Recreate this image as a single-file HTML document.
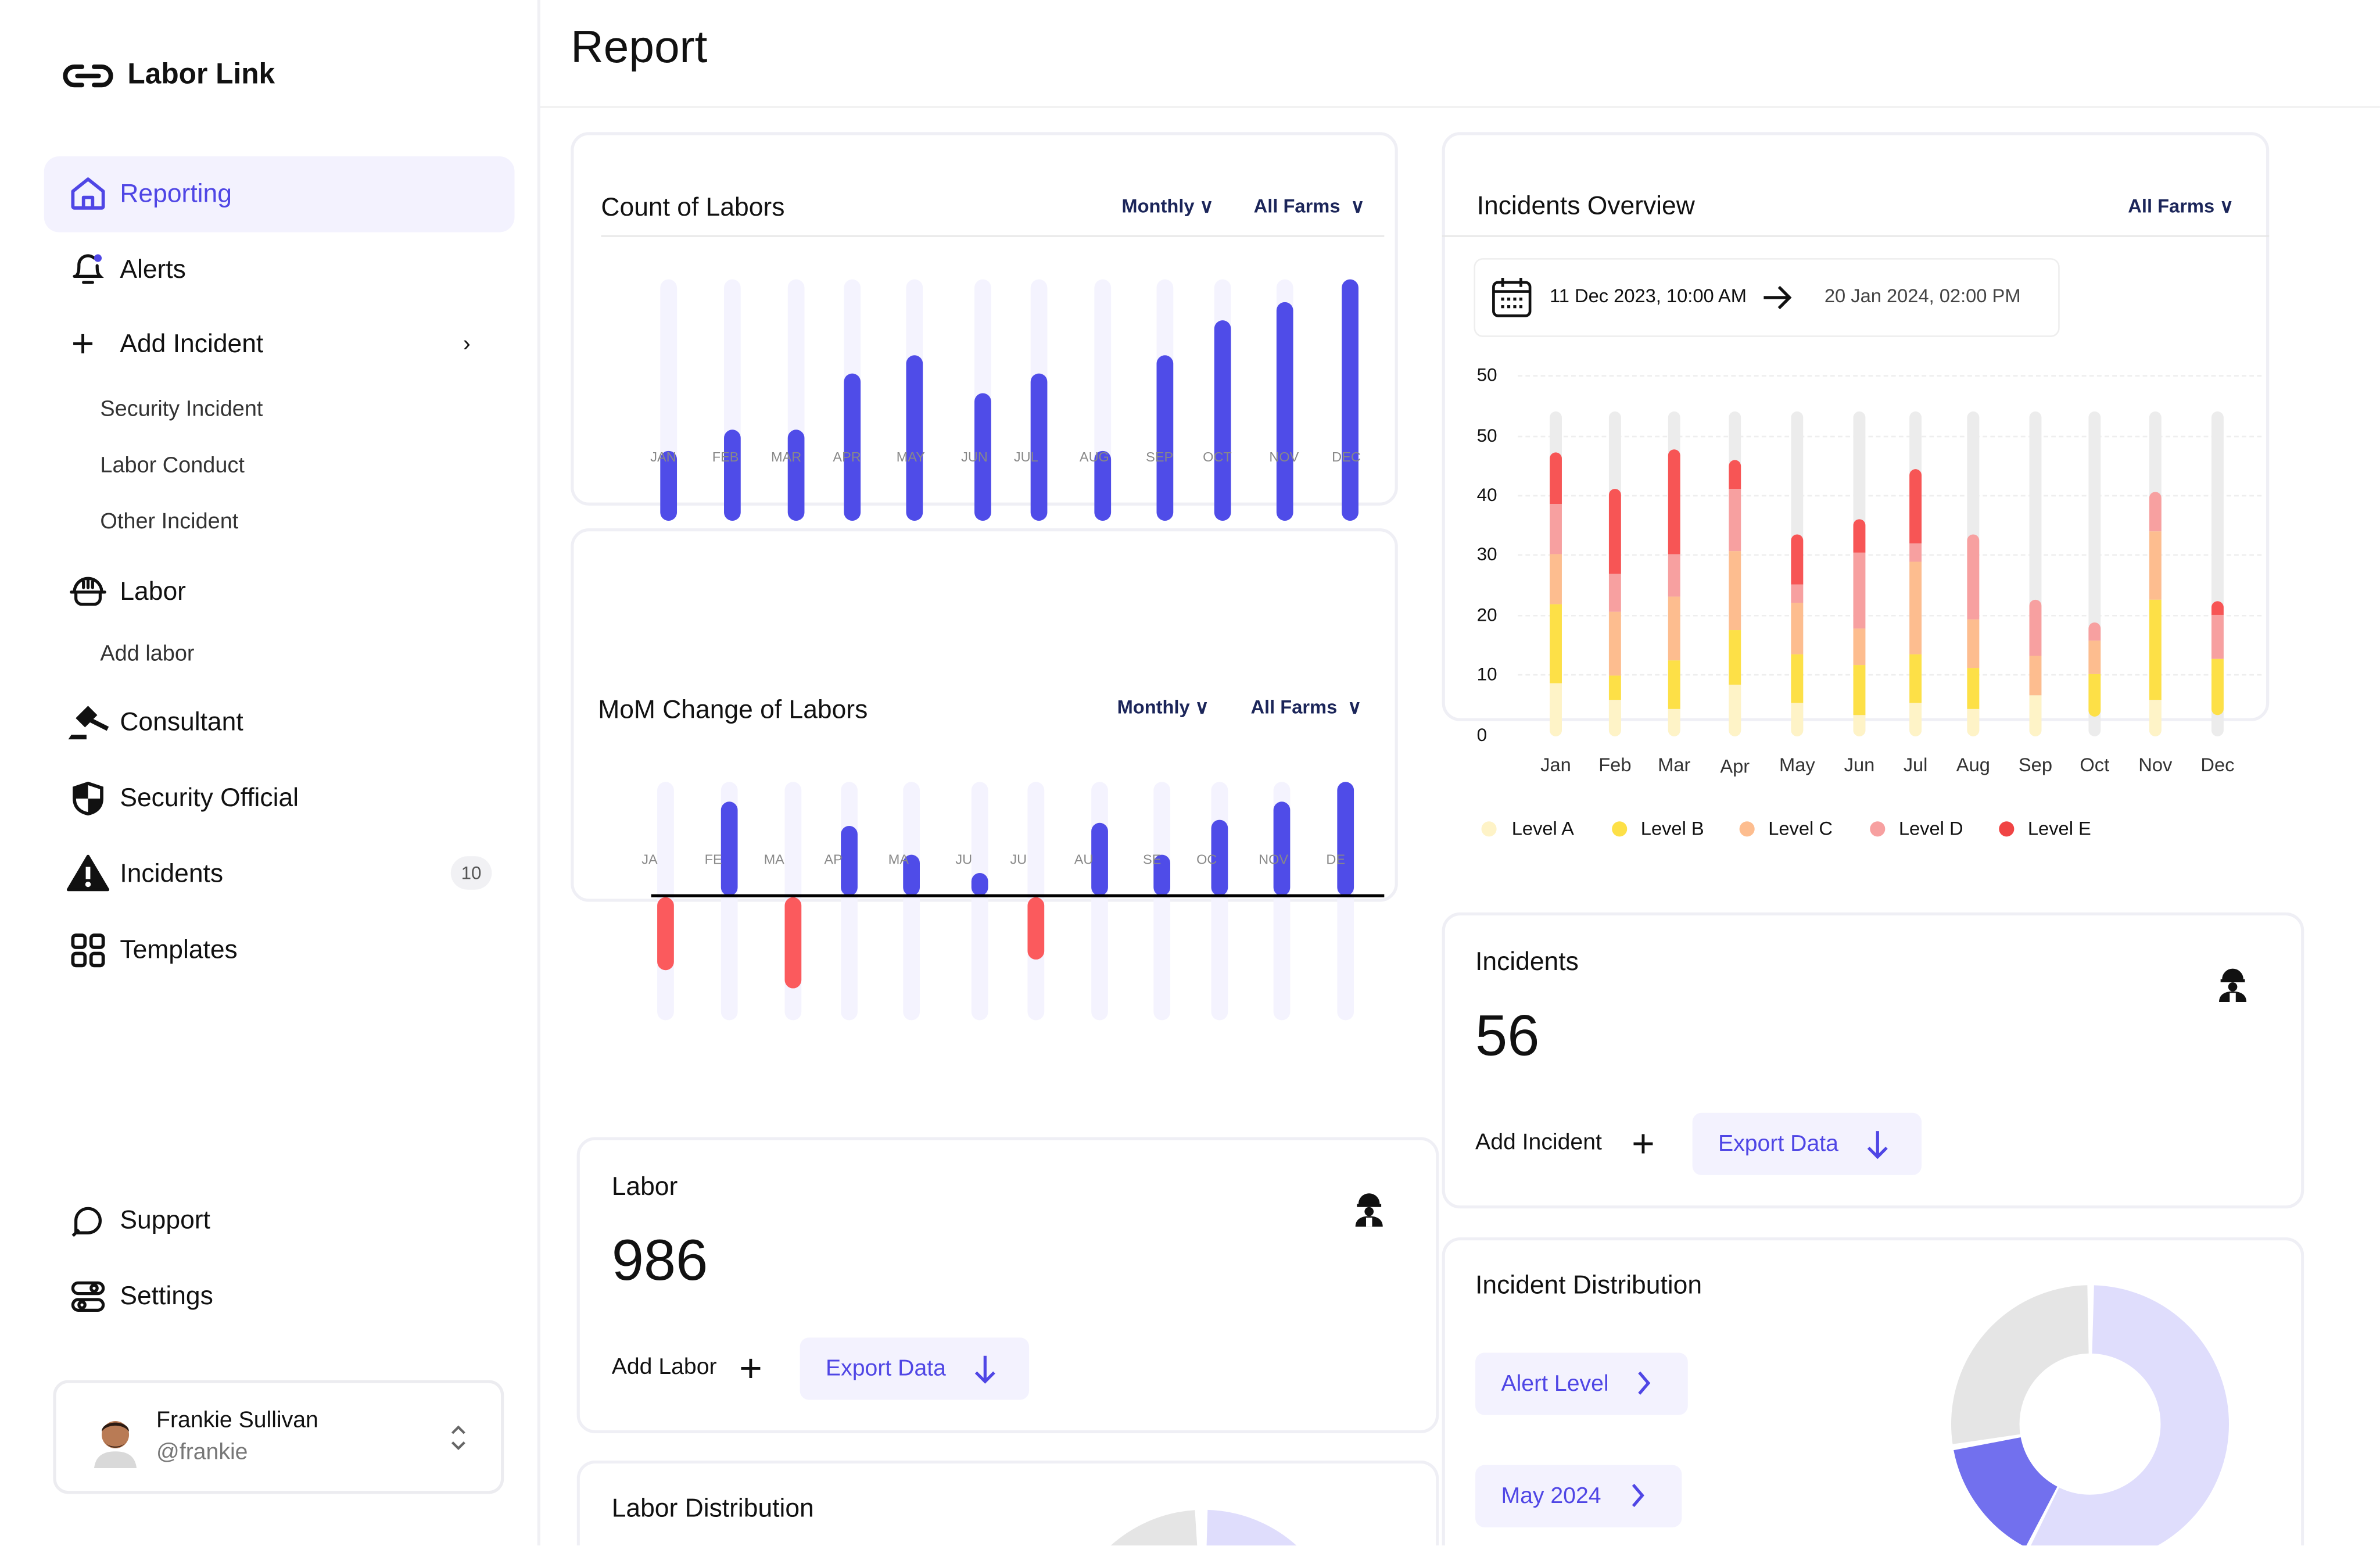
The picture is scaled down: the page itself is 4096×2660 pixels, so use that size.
<!DOCTYPE html>
<html><head><meta charset="utf-8"><style>
html,body{margin:0;padding:0;background:#fff;width:4096px;height:2660px;overflow:hidden}
#w{position:absolute;left:0;top:0;width:1568px;height:1018px;transform:scale(2.6122);transform-origin:0 0;font-family:"Liberation Sans",sans-serif;color:#111;overflow:hidden}
.a{position:absolute}
.card{position:absolute;border:2px solid #efeff5;border-radius:12px;background:#fff;box-sizing:border-box}
.t{position:absolute;width:11px;background:#f4f3fe;border-radius:6px}
.b{position:absolute;width:11px;background:#4f4ce8;border-radius:6px}
.r{position:absolute;width:11px;background:#fb5a5d;border-radius:6px}
.ml{position:absolute;font-size:9px;color:#888;width:40px;text-align:center}
.nav{position:absolute;left:79px;font-size:17px;color:#111}
.sub{position:absolute;left:66px;font-size:14.5px;color:#333}
.dd{position:absolute;font-size:12.5px;color:#1b2559;font-weight:bold}
.st{position:absolute;width:8px;border-radius:4px;background:#ececec}
.s{position:absolute;width:8px;left:0}
.yl{position:absolute;left:973px;font-size:12px;color:#111}
.grid{position:absolute;left:1000px;width:490px;border-top:1px dashed #eee}
.xl{position:absolute;font-size:12.5px;color:#333;width:40px;text-align:center}
.btn{position:absolute;background:#f3f2fe;border-radius:6px;color:#4f46e5;font-size:15px;box-sizing:border-box}
</style></head><body><div id="w">

<!-- sidebar -->
<div class="a" style="left:354px;top:0;width:2px;height:1018px;background:#f0f0f4"></div>
<svg class="a" style="left:41px;top:41px" width="34" height="18" viewBox="0 0 34 18"><path d="M13 3H8a6 6 0 0 0 0 12h5M21 3h5a6 6 0 0 1 0 12h-5M10 9h14" fill="none" stroke="#111" stroke-width="3" stroke-linecap="round"/></svg>
<div class="a" style="left:84px;top:39px;font-size:19px;font-weight:bold">Labor Link</div>

<div class="a" style="left:29px;top:103px;width:310px;height:50px;background:#f3f2fe;border-radius:10px"></div>
<svg class="a" style="left:46px;top:116px" width="24" height="23" viewBox="0 0 24 23"><path d="M2 10L12 2l10 8v10a1 1 0 0 1-1 1H3a1 1 0 0 1-1-1z M9 21v-7h6v7" fill="none" stroke="#4f46e5" stroke-width="2.2" stroke-linejoin="round"/></svg>
<div class="nav" style="top:118px;color:#4f46e5">Reporting</div>

<svg class="a" style="left:46px;top:166px" width="24" height="22" viewBox="0 0 24 22"><path d="M4 16c2-2 2-4 2-8a6 6 0 0 1 10-4M18 9c0 3 0 5 2 7H3M9 20h6" fill="none" stroke="#111" stroke-width="2" stroke-linecap="round"/><circle cx="18.5" cy="4" r="2.5" fill="#4f46e5"/></svg>
<div class="nav" style="top:168px">Alerts</div>
<div class="a" style="left:47px;top:213px;font-size:26px;line-height:26px">+</div>
<div class="nav" style="top:217px">Add Incident</div>
<div class="a" style="left:305px;top:218px;font-size:15px">&#x203A;</div>
<div class="sub" style="top:262px">Security Incident</div>
<div class="sub" style="top:299px">Labor Conduct</div>
<div class="sub" style="top:336px">Other Incident</div>
<svg class="a" style="left:45px;top:378px" width="26" height="24" viewBox="0 0 26 24"><path d="M4 12a9 9 0 0 1 18 0M2 12h22M5 12v4a4 4 0 0 0 4 4h8a4 4 0 0 0 4-4v-4M10 5v4M13 4v5M16 5v4" fill="none" stroke="#111" stroke-width="2" stroke-linecap="round"/></svg>
<div class="nav" style="top:380px">Labor</div>
<div class="sub" style="top:423px">Add labor</div>
<svg class="a" style="left:44px;top:464px" width="28" height="24" viewBox="0 0 28 24"><path d="M1 23h12v-3H3z" fill="#111"/><path d="M8 9l6-6 4 4-6 6zM15 10l12 6" stroke="#111" stroke-width="3" fill="#111"/></svg>
<div class="nav" style="top:466px">Consultant</div>
<svg class="a" style="left:47px;top:514px" width="22" height="24" viewBox="0 0 22 24"><path d="M11 2l9 3v7c0 6-4 9-9 10-5-1-9-4-9-10V5z" fill="none" stroke="#111" stroke-width="2.2"/><path d="M11 2v10H2v-7zM11 12h9c0 6-4 9-9 10z" fill="#111"/></svg>
<div class="nav" style="top:516px">Security Official</div>
<svg class="a" style="left:44px;top:563px" width="28" height="24" viewBox="0 0 28 24"><path d="M14 1L27 23H1z" fill="#111" stroke="#111" stroke-linejoin="round" stroke-width="2"/><rect x="12.5" y="8" width="3" height="8" fill="#fff"/><circle cx="14" cy="19.5" r="1.8" fill="#fff"/></svg>
<div class="nav" style="top:566px">Incidents</div>
<div class="a" style="left:297px;top:564px;width:27px;height:22px;border-radius:11px;background:#f1f1f4;font-size:12px;color:#555;text-align:center;line-height:22px">10</div>
<svg class="a" style="left:46px;top:614px" width="24" height="24" viewBox="0 0 24 24"><g fill="none" stroke="#111" stroke-width="2.2"><rect x="2" y="2" width="8" height="8" rx="2"/><rect x="14" y="2" width="8" height="8" rx="2"/><rect x="2" y="14" width="8" height="8" rx="2"/><rect x="14" y="14" width="8" height="8" rx="2"/></g></svg>
<div class="nav" style="top:616px">Templates</div>

<svg class="a" style="left:46px;top:792px" width="24" height="24" viewBox="0 0 24 24"><path d="M4 20V12a8 8 0 1 1 8 8zM2 22l4-4" fill="none" stroke="#111" stroke-width="2" stroke-linejoin="round"/></svg>
<div class="nav" style="top:794px">Support</div>
<svg class="a" style="left:46px;top:842px" width="24" height="24" viewBox="0 0 24 24"><g fill="none" stroke="#111" stroke-width="2"><rect x="2" y="3" width="20" height="7" rx="3.5"/><rect x="2" y="14" width="20" height="7" rx="3.5"/><circle cx="16" cy="6.5" r="2"/><circle cx="8" cy="17.5" r="2"/></g></svg>
<div class="nav" style="top:844px">Settings</div>

<div class="a" style="left:35px;top:909px;width:297px;height:75px;border:2px solid #ececf0;border-radius:10px;box-sizing:border-box"></div>
<svg class="a" style="left:58px;top:927px" width="36" height="40" viewBox="0 0 36 40"><circle cx="18" cy="18" r="9" fill="#b97b55"/><path d="M9 16c0-8 18-8 18 0-2-3-6-4-9-4s-7 1-9 4z" fill="#2b1a12"/><path d="M11 22c2 6 12 6 14 0-1 5-13 5-14 0z" fill="#3a2418"/><path d="M4 40c1-8 6-11 14-11s13 3 14 11z" fill="#d9d9d9"/></svg>
<div class="a" style="left:103px;top:927px;font-size:15px">Frankie Sullivan</div>
<div class="a" style="left:103px;top:948px;font-size:15px;color:#777">@frankie</div>
<svg class="a" style="left:295px;top:938px" width="14" height="18" viewBox="0 0 14 18"><path d="M3 6l4-4 4 4M3 12l4 4 4-4" fill="none" stroke="#666" stroke-width="1.6"/></svg>

<!-- header -->
<div class="a" style="left:376px;top:15px;font-size:30px">Report</div>
<div class="a" style="left:356px;top:70px;width:1212px;height:1px;background:#eee"></div>

<!-- Count of labors -->
<div class="card" style="left:376px;top:87px;width:545px;height:246px"></div>
<div class="a" style="left:396px;top:127px;font-size:17px">Count of Labors</div>
<div class="dd" style="left:739px;top:128px">Monthly &#x2228;</div>
<div class="dd" style="left:826px;top:128px">All Farms &nbsp;&#x2228;</div>
<div class="a" style="left:396px;top:155px;width:516px;height:1px;background:#e6e6e6"></div>

<div class="t" style="left:435px;top:184px;height:159px"></div><div class="b" style="left:435px;top:297px;height:46px"></div>
<div class="t" style="left:477px;top:184px;height:159px"></div><div class="b" style="left:477px;top:283px;height:60px"></div>
<div class="t" style="left:519px;top:184px;height:159px"></div><div class="b" style="left:519px;top:283px;height:60px"></div>
<div class="t" style="left:556px;top:184px;height:159px"></div><div class="b" style="left:556px;top:246px;height:97px"></div>
<div class="t" style="left:597px;top:184px;height:159px"></div><div class="b" style="left:597px;top:234px;height:109px"></div>
<div class="t" style="left:642px;top:184px;height:159px"></div><div class="b" style="left:642px;top:259px;height:84px"></div>
<div class="t" style="left:679px;top:184px;height:159px"></div><div class="b" style="left:679px;top:246px;height:97px"></div>
<div class="t" style="left:721px;top:184px;height:159px"></div><div class="b" style="left:721px;top:297px;height:46px"></div>
<div class="t" style="left:762px;top:184px;height:159px"></div><div class="b" style="left:762px;top:234px;height:109px"></div>
<div class="t" style="left:800px;top:184px;height:159px"></div><div class="b" style="left:800px;top:211px;height:132px"></div>
<div class="t" style="left:841px;top:184px;height:159px"></div><div class="b" style="left:841px;top:199px;height:144px"></div>
<div class="t" style="left:884px;top:184px;height:159px"></div><div class="b" style="left:884px;top:184px;height:159px"></div>
<div class="ml" style="left:417px;top:296px">JAN</div><div class="ml" style="left:458px;top:296px">FEB</div><div class="ml" style="left:498px;top:296px">MAR</div><div class="ml" style="left:538px;top:296px">APR</div><div class="ml" style="left:580px;top:296px">MAY</div><div class="ml" style="left:622px;top:296px">JUN</div><div class="ml" style="left:656px;top:296px">JUL</div><div class="ml" style="left:701px;top:296px">AUG</div><div class="ml" style="left:744px;top:296px">SEP</div><div class="ml" style="left:782px;top:296px">OCT</div><div class="ml" style="left:826px;top:296px">NOV</div><div class="ml" style="left:867px;top:296px">DEC</div>

<!-- MoM -->
<div class="card" style="left:376px;top:348px;width:545px;height:246px"></div>
<div class="a" style="left:394px;top:458px;font-size:17px">MoM Change of Labors</div>
<div class="dd" style="left:736px;top:458px">Monthly &#x2228;</div>
<div class="dd" style="left:824px;top:458px">All Farms &nbsp;&#x2228;</div>
<div class="t" style="left:433px;top:515px;height:157px"></div><div class="r" style="left:433px;top:591px;height:48px"></div>
<div class="t" style="left:475px;top:515px;height:157px"></div><div class="b" style="left:475px;top:528px;height:62px"></div>
<div class="t" style="left:517px;top:515px;height:157px"></div><div class="r" style="left:517px;top:591px;height:60px"></div>
<div class="t" style="left:554px;top:515px;height:157px"></div><div class="b" style="left:554px;top:544px;height:46px"></div>
<div class="t" style="left:595px;top:515px;height:157px"></div><div class="b" style="left:595px;top:563px;height:27px"></div>
<div class="t" style="left:640px;top:515px;height:157px"></div><div class="b" style="left:640px;top:575px;height:15px"></div>
<div class="t" style="left:677px;top:515px;height:157px"></div><div class="r" style="left:677px;top:591px;height:41px"></div>
<div class="t" style="left:719px;top:515px;height:157px"></div><div class="b" style="left:719px;top:542px;height:48px"></div>
<div class="t" style="left:760px;top:515px;height:157px"></div><div class="b" style="left:760px;top:563px;height:27px"></div>
<div class="t" style="left:798px;top:515px;height:157px"></div><div class="b" style="left:798px;top:540px;height:50px"></div>
<div class="t" style="left:839px;top:515px;height:157px"></div><div class="b" style="left:839px;top:528px;height:62px"></div>
<div class="t" style="left:881px;top:515px;height:157px"></div><div class="b" style="left:881px;top:515px;height:75px"></div>
<div class="ml" style="left:408px;top:561px">JA</div><div class="ml" style="left:450px;top:561px">FE</div><div class="ml" style="left:490px;top:561px">MA</div><div class="ml" style="left:529px;top:561px">AP</div><div class="ml" style="left:572px;top:561px">MA</div><div class="ml" style="left:615px;top:561px">JU</div><div class="ml" style="left:651px;top:561px">JU</div><div class="ml" style="left:694px;top:561px">AU</div><div class="ml" style="left:739px;top:561px">SE</div><div class="ml" style="left:775px;top:561px">OC</div><div class="ml" style="left:819px;top:561px">NOV</div><div class="ml" style="left:860px;top:561px">DE</div>
<div class="a" style="left:429px;top:589px;width:483px;height:2px;background:#000"></div>

<!-- Labor card -->
<div class="card" style="left:380px;top:749px;width:568px;height:195px"></div>
<div class="a" style="left:403px;top:772px;font-size:17px">Labor</div>
<div class="a" style="left:403px;top:810px;font-size:38px">986</div>
<svg class="a" style="left:890px;top:785px" width="24" height="24" viewBox="0 0 24 24"><path d="M6 8a6 6 0 0 1 12 0zM4 9h16" stroke="#111" stroke-width="2" fill="#111"/><circle cx="12" cy="13" r="3" fill="#111"/><path d="M3 23c0-5 4-7 9-7s9 2 9 7z" fill="#111"/><rect x="10" y="17" width="4" height="6" fill="#fff"/></svg>
<div class="a" style="left:403px;top:892px;font-size:15px">Add Labor</div>
<div class="a" style="left:487px;top:888px;font-size:26px;line-height:26px;font-weight:300">+</div>
<div class="btn" style="left:527px;top:881px;width:151px;height:41px;padding:12px 0 0 17px">Export Data</div>
<svg class="a" style="left:641px;top:891px" width="16" height="22" viewBox="0 0 16 22"><path d="M8 2v17M2 13l6 6 6-6" fill="none" stroke="#4f46e5" stroke-width="2"/></svg>

<div class="card" style="left:380px;top:962px;width:568px;height:56px;border-bottom:none;border-radius:12px 12px 0 0"></div>
<div class="a" style="left:403px;top:984px;font-size:17px">Labor Distribution</div>
<svg class="a" style="left:693px;top:986px" width="200" height="32" viewBox="0 0 200 32"><g transform="rotate(-90 100 100)" fill="none" stroke-width="45"><circle cx="100" cy="100" r="69" stroke="#dfddfc" stroke-dasharray="210 224" stroke-dashoffset="-2"/><circle cx="100" cy="100" r="69" stroke="#e5e5e5" stroke-dasharray="210 224" stroke-dashoffset="-219"/></g></svg>

<!-- Incidents Overview -->
<div class="card" style="left:950px;top:87px;width:545px;height:388px"></div>
<div class="a" style="left:973px;top:126px;font-size:17px">Incidents Overview</div>
<div class="dd" style="left:1402px;top:128px">All Farms &#x2228;</div>
<div class="a" style="left:950px;top:155px;width:545px;height:1px;background:#e6e6e6"></div>
<div class="a" style="left:971px;top:170px;width:386px;height:52px;border:1px solid #eee;border-radius:6px;box-sizing:border-box"></div>
<svg class="a" style="left:982px;top:182px" width="28" height="28" viewBox="0 0 28 28"><g fill="none" stroke="#111" stroke-width="1.8"><rect x="2" y="4" width="24" height="22" rx="3"/><path d="M2 10h24M8 1v6M20 1v6"/></g><g fill="#111"><rect x="7" y="14" width="2" height="2"/><rect x="11" y="14" width="2" height="2"/><rect x="15" y="14" width="2" height="2"/><rect x="19" y="14" width="2" height="2"/><rect x="7" y="19" width="2" height="2"/><rect x="11" y="19" width="2" height="2"/><rect x="15" y="19" width="2" height="2"/><rect x="19" y="19" width="2" height="2"/></g></svg>
<div class="a" style="left:1021px;top:188px;font-size:12.5px">11 Dec 2023, 10:00 AM</div>
<svg class="a" style="left:1160px;top:187px" width="22" height="18" viewBox="0 0 22 18"><path d="M2 9h17M12 2l7 7-7 7" fill="none" stroke="#111" stroke-width="2"/></svg>
<div class="a" style="left:1202px;top:188px;font-size:12.5px;color:#444">20 Jan 2024, 02:00 PM</div>

<div class="yl" style="top:240px">50</div><div class="yl" style="top:280px">50</div><div class="yl" style="top:319px">40</div><div class="yl" style="top:358px">30</div><div class="yl" style="top:398px">20</div><div class="yl" style="top:437px">10</div><div class="yl" style="top:477px">0</div>
<div class="grid" style="top:247px"></div><div class="grid" style="top:287px"></div><div class="grid" style="top:326px"></div><div class="grid" style="top:365px"></div><div class="grid" style="top:405px"></div><div class="grid" style="top:444px"></div>

<div class="st" style="left:1021px;top:271px;height:214px"><div class="s" style="top:27px;height:34px;background:#f75555;border-radius:4px 4px 0 0"></div><div class="s" style="top:61px;height:33px;background:#f7a0a0"></div><div class="s" style="top:94px;height:33px;background:#fdbd8f"></div><div class="s" style="top:127px;height:52px;background:#fde047"></div><div class="s" style="top:179px;height:35px;background:#fef3c7;border-radius:0 0 4px 4px"></div></div>
<div class="st" style="left:1060px;top:271px;height:214px"><div class="s" style="top:51px;height:56px;background:#f75555;border-radius:4px 4px 0 0"></div><div class="s" style="top:107px;height:25px;background:#f7a0a0"></div><div class="s" style="top:132px;height:42px;background:#fdbd8f"></div><div class="s" style="top:174px;height:16px;background:#fde047"></div><div class="s" style="top:190px;height:24px;background:#fef3c7;border-radius:0 0 4px 4px"></div></div>
<div class="st" style="left:1099px;top:271px;height:214px"><div class="s" style="top:25px;height:69px;background:#f75555;border-radius:4px 4px 0 0"></div><div class="s" style="top:94px;height:28px;background:#f7a0a0"></div><div class="s" style="top:122px;height:42px;background:#fdbd8f"></div><div class="s" style="top:164px;height:32px;background:#fde047"></div><div class="s" style="top:196px;height:18px;background:#fef3c7;border-radius:0 0 4px 4px"></div></div>
<div class="st" style="left:1139px;top:271px;height:214px"><div class="s" style="top:32px;height:19px;background:#f75555;border-radius:4px 4px 0 0"></div><div class="s" style="top:51px;height:41px;background:#f7a0a0"></div><div class="s" style="top:92px;height:52px;background:#fdbd8f"></div><div class="s" style="top:144px;height:36px;background:#fde047"></div><div class="s" style="top:180px;height:34px;background:#fef3c7;border-radius:0 0 4px 4px"></div></div>
<div class="st" style="left:1180px;top:271px;height:214px"><div class="s" style="top:81px;height:33px;background:#f75555;border-radius:4px 4px 0 0"></div><div class="s" style="top:114px;height:12px;background:#f7a0a0"></div><div class="s" style="top:126px;height:34px;background:#fdbd8f"></div><div class="s" style="top:160px;height:32px;background:#fde047"></div><div class="s" style="top:192px;height:22px;background:#fef3c7;border-radius:0 0 4px 4px"></div></div>
<div class="st" style="left:1221px;top:271px;height:214px"><div class="s" style="top:71px;height:22px;background:#f75555;border-radius:4px 4px 0 0"></div><div class="s" style="top:93px;height:50px;background:#f7a0a0"></div><div class="s" style="top:143px;height:24px;background:#fdbd8f"></div><div class="s" style="top:167px;height:33px;background:#fde047"></div><div class="s" style="top:200px;height:14px;background:#fef3c7;border-radius:0 0 4px 4px"></div></div>
<div class="st" style="left:1258px;top:271px;height:214px"><div class="s" style="top:38px;height:49px;background:#f75555;border-radius:4px 4px 0 0"></div><div class="s" style="top:87px;height:12px;background:#f7a0a0"></div><div class="s" style="top:99px;height:61px;background:#fdbd8f"></div><div class="s" style="top:160px;height:32px;background:#fde047"></div><div class="s" style="top:192px;height:22px;background:#fef3c7;border-radius:0 0 4px 4px"></div></div>
<div class="st" style="left:1296px;top:271px;height:214px"><div class="s" style="top:81px;height:56px;background:#f7a0a0;border-radius:4px 4px 0 0"></div><div class="s" style="top:137px;height:32px;background:#fdbd8f"></div><div class="s" style="top:169px;height:27px;background:#fde047"></div><div class="s" style="top:196px;height:18px;background:#fef3c7;border-radius:0 0 4px 4px"></div></div>
<div class="st" style="left:1337px;top:271px;height:214px"><div class="s" style="top:124px;height:37px;background:#f7a0a0;border-radius:4px 4px 0 0"></div><div class="s" style="top:161px;height:26px;background:#fdbd8f"></div><div class="s" style="top:187px;height:27px;background:#fef3c7;border-radius:0 0 4px 4px"></div></div>
<div class="st" style="left:1376px;top:271px;height:214px"><div class="s" style="top:139px;height:12px;background:#f7a0a0;border-radius:4px 4px 0 0"></div><div class="s" style="top:151px;height:22px;background:#fdbd8f"></div><div class="s" style="top:173px;height:28px;background:#fde047;border-radius:0 0 4px 4px"></div></div>
<div class="st" style="left:1416px;top:271px;height:214px"><div class="s" style="top:53px;height:26px;background:#f7a0a0;border-radius:4px 4px 0 0"></div><div class="s" style="top:79px;height:45px;background:#fdbd8f"></div><div class="s" style="top:124px;height:66px;background:#fde047"></div><div class="s" style="top:190px;height:24px;background:#fef3c7;border-radius:0 0 4px 4px"></div></div>
<div class="st" style="left:1457px;top:271px;height:214px"><div class="s" style="top:125px;height:9px;background:#f75555;border-radius:4px 4px 0 0"></div><div class="s" style="top:134px;height:29px;background:#f7a0a0"></div><div class="s" style="top:163px;height:37px;background:#fde047;border-radius:0 0 4px 4px"></div></div>

<div class="xl" style="left:1005px;top:497px">Jan</div><div class="xl" style="left:1044px;top:497px">Feb</div><div class="xl" style="left:1083px;top:497px">Mar</div><div class="xl" style="left:1123px;top:498px">Apr</div><div class="xl" style="left:1164px;top:497px">May</div><div class="xl" style="left:1205px;top:497px">Jun</div><div class="xl" style="left:1242px;top:497px">Jul</div><div class="xl" style="left:1280px;top:497px">Aug</div><div class="xl" style="left:1321px;top:497px">Sep</div><div class="xl" style="left:1360px;top:497px">Oct</div><div class="xl" style="left:1400px;top:497px">Nov</div><div class="xl" style="left:1441px;top:497px">Dec</div>

<div class="a" style="left:976px;top:541px;width:10px;height:10px;border-radius:5px;background:#fef3c7"></div><div class="a" style="left:996px;top:539px;font-size:12.5px">Level A</div>
<div class="a" style="left:1062px;top:541px;width:10px;height:10px;border-radius:5px;background:#fde047"></div><div class="a" style="left:1081px;top:539px;font-size:12.5px">Level B</div>
<div class="a" style="left:1146px;top:541px;width:10px;height:10px;border-radius:5px;background:#fdbd8f"></div><div class="a" style="left:1165px;top:539px;font-size:12.5px">Level C</div>
<div class="a" style="left:1232px;top:541px;width:10px;height:10px;border-radius:5px;background:#f7a0a0"></div><div class="a" style="left:1251px;top:539px;font-size:12.5px">Level D</div>
<div class="a" style="left:1317px;top:541px;width:10px;height:10px;border-radius:5px;background:#f04444"></div><div class="a" style="left:1336px;top:539px;font-size:12.5px">Level E</div>

<!-- Incidents card -->
<div class="card" style="left:950px;top:601px;width:568px;height:195px"></div>
<div class="a" style="left:972px;top:624px;font-size:17px">Incidents</div>
<div class="a" style="left:972px;top:662px;font-size:38px">56</div>
<svg class="a" style="left:1459px;top:637px" width="24" height="24" viewBox="0 0 24 24"><path d="M6 8a6 6 0 0 1 12 0zM4 9h16" stroke="#111" stroke-width="2" fill="#111"/><circle cx="12" cy="13" r="3" fill="#111"/><path d="M3 23c0-5 4-7 9-7s9 2 9 7z" fill="#111"/><rect x="10" y="17" width="4" height="6" fill="#fff"/></svg>
<div class="a" style="left:972px;top:744px;font-size:15px">Add Incident</div>
<div class="a" style="left:1075px;top:740px;font-size:26px;line-height:26px">+</div>
<div class="btn" style="left:1115px;top:733px;width:151px;height:41px;padding:12px 0 0 17px">Export Data</div>
<svg class="a" style="left:1229px;top:743px" width="16" height="22" viewBox="0 0 16 22"><path d="M8 2v17M2 13l6 6 6-6" fill="none" stroke="#4f46e5" stroke-width="2"/></svg>

<!-- Incident Distribution -->
<div class="card" style="left:950px;top:815px;width:568px;height:203px;border-bottom:none;border-radius:12px 12px 0 0"></div>
<div class="a" style="left:972px;top:837px;font-size:17px">Incident Distribution</div>
<div class="btn" style="left:972px;top:891px;width:140px;height:41px;padding:12px 0 0 17px">Alert Level</div>
<svg class="a" style="left:1077px;top:902px" width="12" height="18" viewBox="0 0 12 18"><path d="M3 2l6 7-6 7" fill="none" stroke="#4f46e5" stroke-width="2"/></svg>
<div class="btn" style="left:972px;top:965px;width:136px;height:41px;padding:12px 0 0 17px">May 2024</div>
<svg class="a" style="left:1073px;top:976px" width="12" height="18" viewBox="0 0 12 18"><path d="M3 2l6 7-6 7" fill="none" stroke="#4f46e5" stroke-width="2"/></svg>
<svg class="a" style="left:1277px;top:838px" width="200" height="180" viewBox="0 0 200 180"><g transform="rotate(-90 100 100)" fill="none" stroke-width="45"><circle cx="100" cy="100" r="69" stroke="#dfddfc" stroke-dasharray="246 188" stroke-dashoffset="-2"/><circle cx="100" cy="100" r="69" stroke="#7270ee" stroke-dasharray="62 372" stroke-dashoffset="-250"/><circle cx="100" cy="100" r="69" stroke="#e5e5e5" stroke-dasharray="117 317" stroke-dashoffset="-315"/></g></svg>

</div></body></html>
